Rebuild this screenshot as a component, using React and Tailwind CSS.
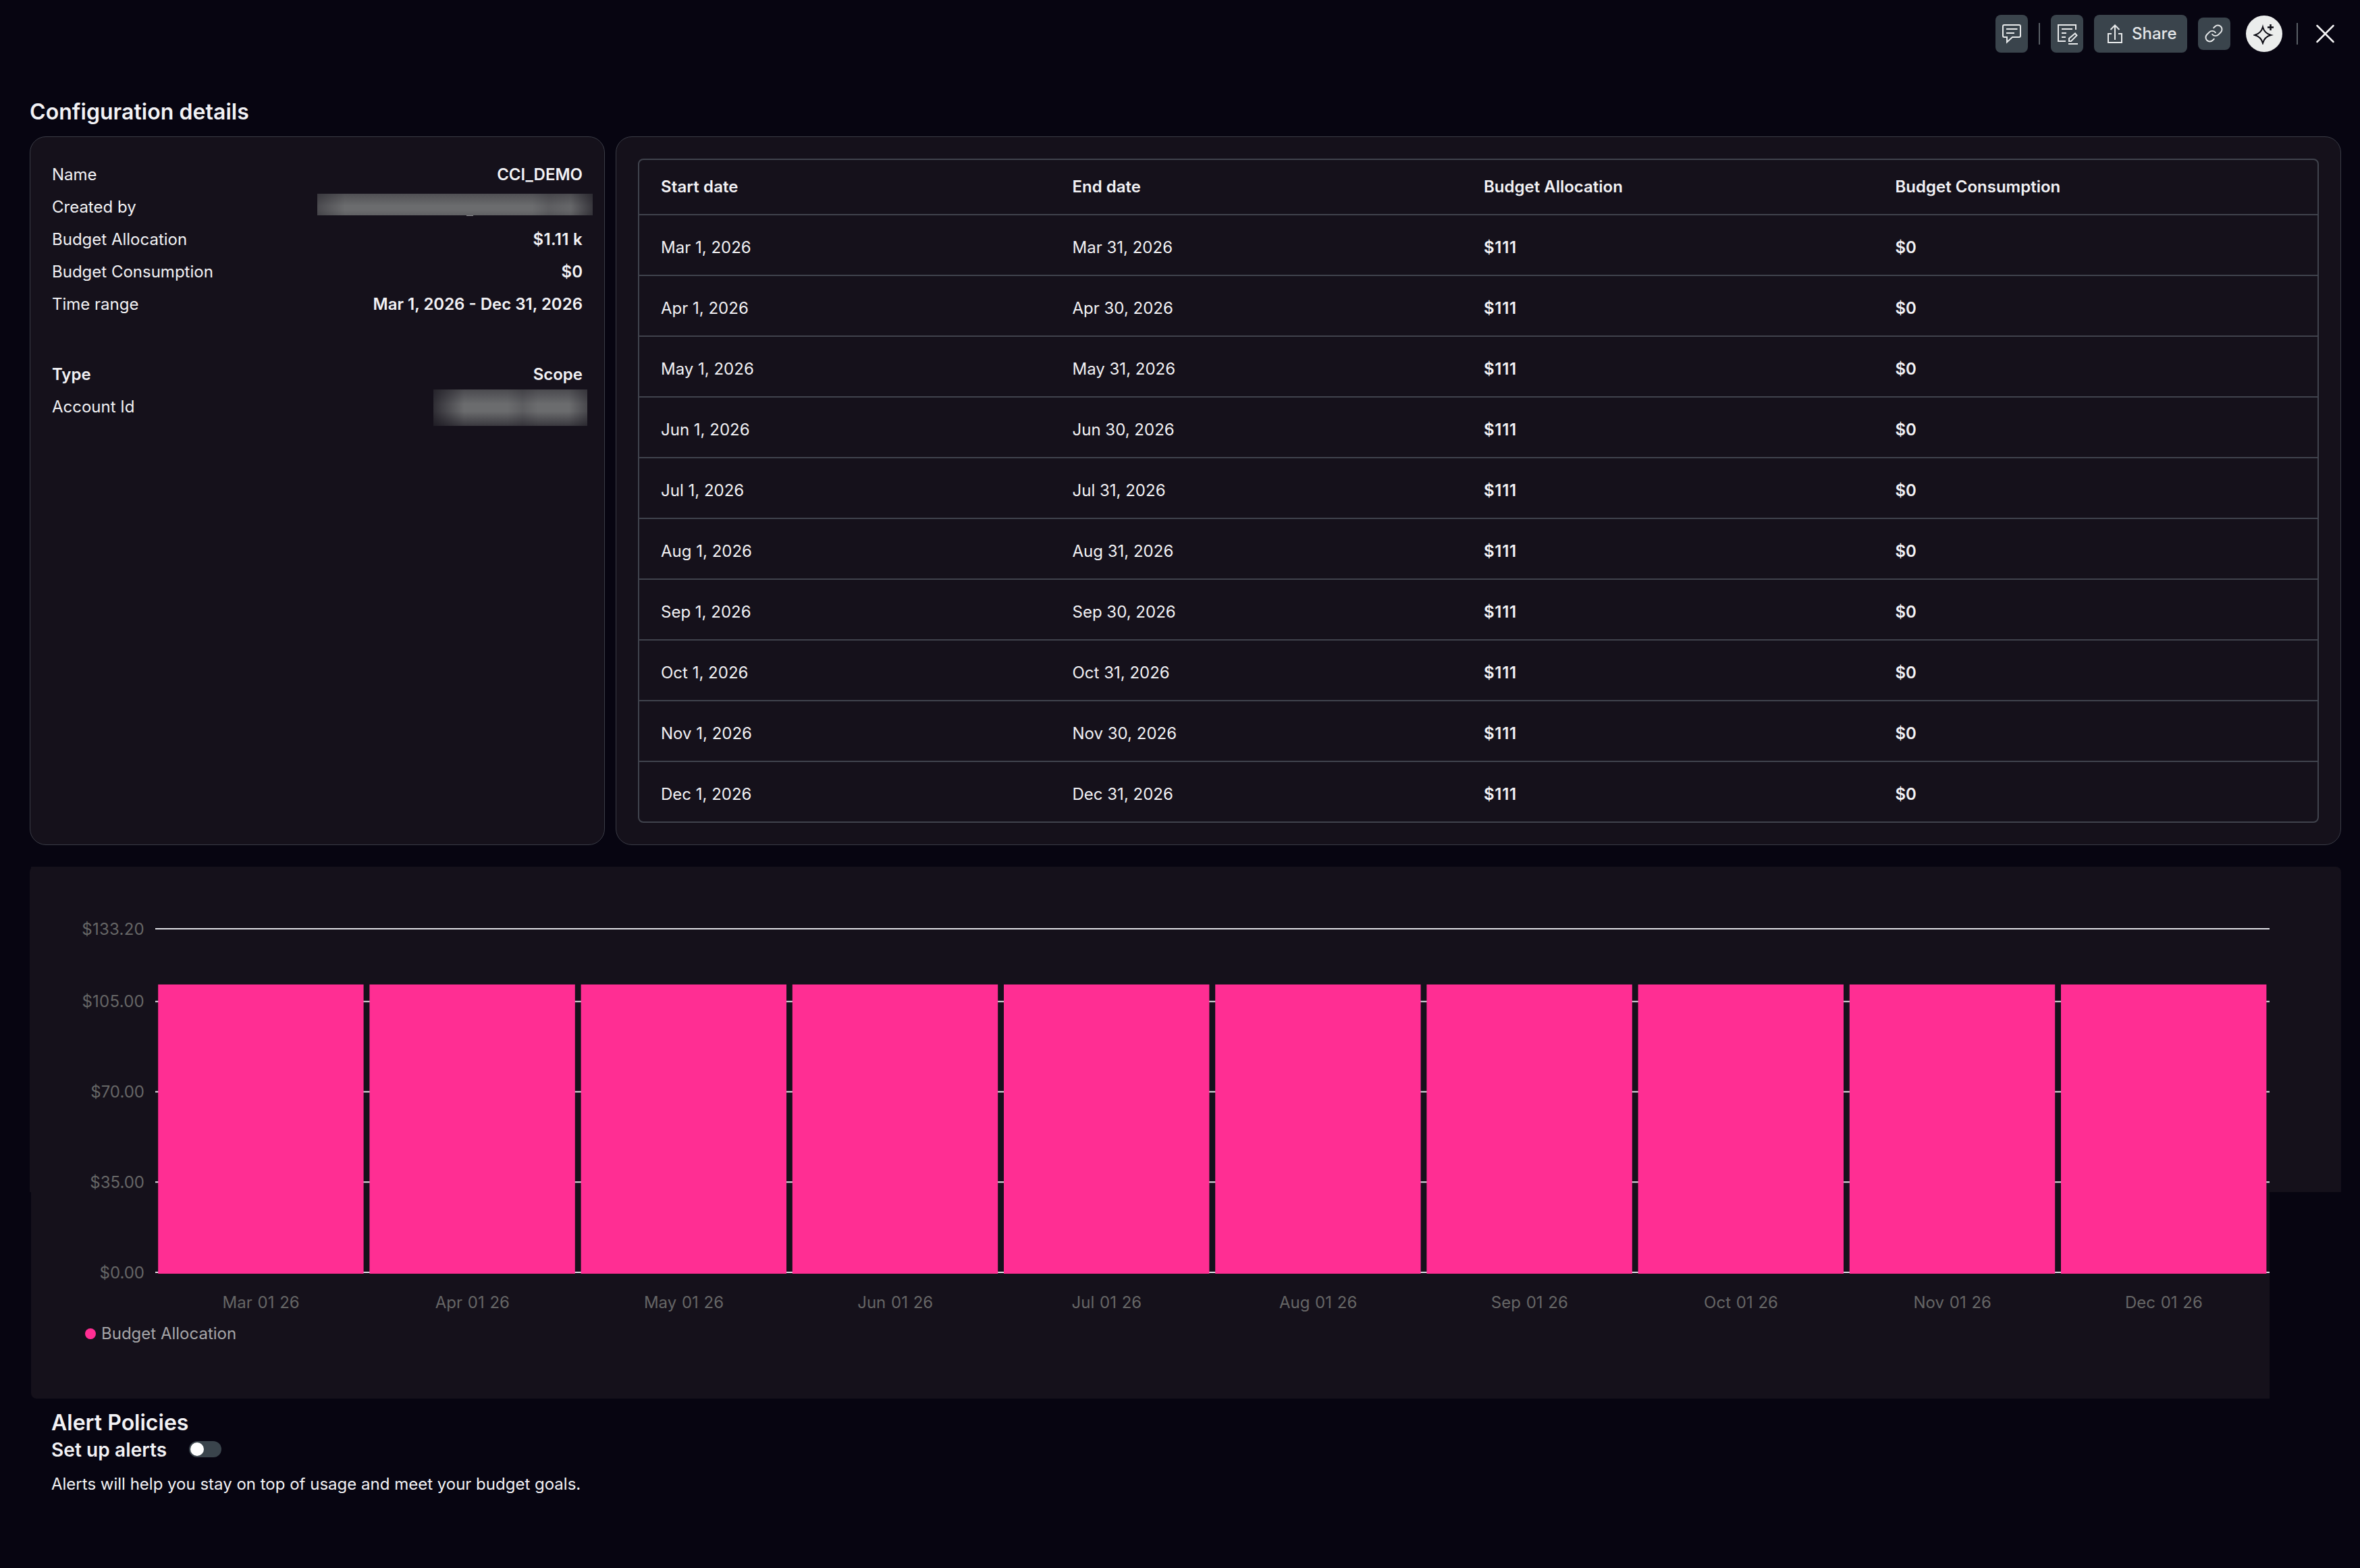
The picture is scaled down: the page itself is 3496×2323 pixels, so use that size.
import { Link } from 'lucide-react'

const months = [
  ['Mar', 31], ['Apr', 30], ['May', 31], ['Jun', 30], ['Jul', 31],
  ['Aug', 31], ['Sep', 30], ['Oct', 31], ['Nov', 30], ['Dec', 31],
]

const details = [
  ['Name', 'CCI_DEMO'],
  ['Created by', null],
  ['Budget Allocation', '$1.11 k'],
  ['Budget Consumption', '$0'],
  ['Time range', 'Mar 1, 2026 - Dec 31, 2026'],
]

// y position of every tick inside the chart svg
const ticks = [
  ['$133.20', 92], ['$105.00', 199.8], ['$70.00', 333.5], ['$35.00', 467.3], ['$0.00', 601],
]

const STEP = 313.2

function Toolbar() {
  return (
    <div className="flex h-[100px] items-center justify-end pr-[38px]">
      <button className="flex h-14 w-12 items-center justify-center rounded-lg bg-[#3a444c]">
        <svg className="h-8 w-8" viewBox="0 0 32 32" fill="none" stroke="#e8eaeb" strokeWidth="2">
          <path d="M5 3H27a2 2 0 0 1 2 2V19a2 2 0 0 1-2 2H17L9 28.500V21H5a2 2 0 0 1-2-2V5a2 2 0 0 1 2-2Z" />
          <path d="M8 9H24.500M8 15H20" />
        </svg>
      </button>
      <div className="mx-4 h-8 w-0.5 bg-[#5a6066]" />
      <button className="flex h-14 w-12 items-center justify-center rounded-lg bg-[#3a444c]">
        <svg className="h-8 w-8" viewBox="0 0 32 32" fill="none" stroke="#e8eaeb" strokeWidth="2">
          <path d="M29 10V3H3V27H14" />
          <path d="M8 9H24M8 15H15M8 21H14" />
          <path d="M19 27V23L28 15.500L30.500 18.500L22 27Z M18 31H32" />
        </svg>
      </button>
      <button className="ml-4 flex h-14 w-[138px] items-center rounded-lg bg-[#3a444c] pl-4 text-2xl font-medium text-[#e3e6e8]">
        <svg className="mr-2 h-8 w-8" viewBox="0 0 32 32" fill="none" stroke="#e8eaeb" strokeWidth="2">
          <path d="M10 16H5V29H25V16H20M15 25V4M8.500 10L15 3.500L21.500 10" />
        </svg>
        Share
      </button>
      <button className="ml-4 flex h-12 w-12 items-center justify-center rounded-lg bg-[#3a444c]">
        <Link className="mr-0.5 mb-0.5 h-[29px] w-[29px] text-[#e8eaeb]" strokeWidth={1.6} />
      </button>
      <button className="ml-[23px] flex h-[54px] w-[54px] items-center justify-center rounded-full bg-[#ebedec]">
        <svg className="h-8 w-8" viewBox="0 0 32 32" fill="none" stroke="#0c0c14" strokeWidth="2">
          <path d="M14 6Q16.500 15.500 26 18Q16.500 20.500 14 30Q11.500 20.500 2 18Q11.500 15.500 14 6Z" />
          <path d="M25.500 2V11M21 6.500H30" strokeWidth="2.500" />
        </svg>
      </button>
      <div className="ml-[21px] h-8 w-0.5 bg-[#5a6066]" />
      <svg className="ml-[27px] h-7 w-[27px]" viewBox="0 0 27 28" fill="none" stroke="#f5f5f5" strokeWidth="2.500" strokeLinecap="round">
        <path d="M1.500 2L25.500 26M25.500 2L1.500 26" />
      </svg>
    </div>
  )
}

function Details() {
  return (
    <div className="w-[852px] rounded-3xl border border-[#3a3c46] bg-[#15111b] p-8">
      {details.map(([label, value]) => (
        <div key={label} className="flex h-12 items-center justify-between">
          <span>{label}</span>
          {value
            ? <span className={`font-semibold ${value.endsWith('k') ? 'tracking-[0.3px]' : ''}`}>{value}</span>
            : (
              <div className="relative -mr-[15px] mb-2 h-8 w-[408px] bg-[#6b6c6e] bg-[linear-gradient(to_right,#14111a60,transparent_10%,transparent_78%,#14111a28_84%,#14111a10_92%,#14111a99),linear-gradient(to_bottom,#14111a50,transparent_55%,transparent_75%,#14111a20)]">
                <div className="absolute top-full left-[221px] h-px w-2.5 bg-[#8d8d90]" />
              </div>
            )}
        </div>
      ))}
      <div className="mt-14 flex h-12 items-center justify-between font-semibold">
        <span>Type</span>
        <span>Scope</span>
      </div>
      <div className="flex h-12 items-center justify-between">
        <span>Account Id</span>
        <div className="mt-0.5 -mr-[7px] h-[54px] w-[228px] bg-[#6b6c6e] bg-[linear-gradient(to_right,#14111ab0,transparent_20%,transparent_48%,#14111a28_58%,transparent_68%,transparent_88%,#14111a66),linear-gradient(to_bottom,#14111a60,transparent_40%,transparent_60%,#14111a90)]" />
      </div>
    </div>
  )
}

function BudgetTable() {
  return (
    <div className="flex-1 rounded-3xl border border-[#3a3c46] bg-[#15111b] p-8">
      <div className="rounded-lg border-2 border-[#40434d]">
        <div className="grid h-20 grid-cols-4 items-center gap-4 px-8 font-semibold">
          <span className="tracking-[0.1px]">Start date</span>
          <span>End date</span>
          <span>Budget Allocation</span>
          <span>Budget Consumption</span>
        </div>
        {months.map(([m, last]) => (
          <div key={m} className="grid h-[90px] grid-cols-4 items-center gap-4 border-t-2 border-[#40434d] px-8 pt-2">
            <span>{m} 1, 2026</span>
            <span>{m} {last}, 2026</span>
            <span className="font-semibold tracking-[0.7px]">$111</span>
            <span className="font-semibold">$0</span>
          </div>
        ))}
      </div>
    </div>
  )
}

function Chart() {
  return (
    <div className="h-[482px] rounded-t-lg bg-[#15111b] pl-0.5">
      {/* the plot is taller than its card and spills out below it */}
      <div className="h-[788px] w-[3316px] rounded-bl-lg bg-[#15111b]">
        <svg className="h-[788px] w-[3316px]" viewBox="0 0 3316 788" fontSize="24">
          {ticks.map(([label, y]) => (
            <g key={label}>
              <text x="168" y={y + 8.5} textAnchor="end" fill="#666666" className={label.startsWith('$1') ? 'tracking-[0.25px]' : ''}>{label}</text>
              <path d={`M184 ${y}H3316`} stroke="#e0e0e6" strokeWidth="2" />
            </g>
          ))}
          {months.map(([m], i) => (
            <g key={m}>
              <rect x={188.2 + i * STEP} y="174.500" width="304.400" height="428.500" fill="#ff2e93" />
              <text x={184 + (i + 0.5) * STEP} y="654" textAnchor="middle" fill="#666666" className="[word-spacing:1px]">{m} 01 26</text>
            </g>
          ))}
          <circle cx="88" cy="692" r="8" fill="#ff2e93" />
          <text x="104" y="700" fill="#a5a5a8">Budget Allocation</text>
        </svg>
      </div>
    </div>
  )
}

export default function App() {
  return (
    <div className="h-[2323px] w-[3496px] overflow-hidden bg-[#070511] font-['Inter',sans-serif] text-2xl text-[#f2f2f5]">
      <Toolbar />
      <div className="pl-11 pr-7">
        <h1 className="flex h-[102px] items-center pt-[30px] text-[32px] font-semibold tracking-[0.05px]">Configuration details</h1>
        <div className="flex h-[1050px] gap-4">
          <Details />
          <BudgetTable />
        </div>
        <div className="mt-8">
          <Chart />
        </div>
      </div>
      <div className="mt-[322px] pl-[76px]">
        <h2 className="text-[32px] leading-10 font-semibold">Alert Policies</h2>
        <div className="flex h-10 items-center">
          <span className="w-[204px] pt-0.5 text-[28px] font-semibold tracking-[0.1px]">Set up alerts</span>
          <div className="mb-0.5 flex h-6 w-12 items-center rounded-full bg-[#3a444c] p-0.5">
            <div className="h-5 w-5 rounded-full bg-white" />
          </div>
        </div>
        <p className="mt-[15px]">Alerts will help you stay on top of usage and meet your budget goals.</p>
      </div>
    </div>
  )
}
